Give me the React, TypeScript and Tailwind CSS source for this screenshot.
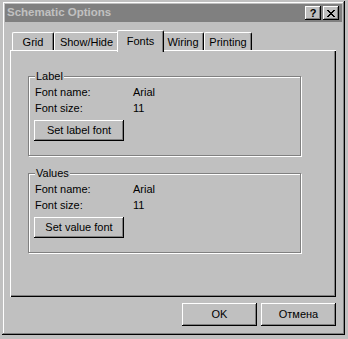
const raised =
  "shadow-[inset_-1px_-1px_#000,inset_1px_1px_#fff,inset_-2px_-2px_#808080]";

function Button({ label, className = "" }: { label: string; className?: string }) {
  return (
    <button
      className={`flex items-center justify-center bg-[#c0c0c0] text-[11px] text-black ${raised} ${className}`}
    >
      {label}
    </button>
  );
}

function Tab({ label, width, active }: { label: string; width: string; active?: boolean }) {
  if (active) {
    return (
      <div
        className={`relative z-10 -mx-[2px] -mb-[2px] flex h-[22px] items-start justify-center rounded-tl-[2px] rounded-tr-[2px] border-l border-t border-l-white border-t-white border-r border-r-black bg-[#c0c0c0] pt-[2px] text-[11px] shadow-[inset_-1px_0_#808080] ${width}`}
      >
        {label}
      </div>
    );
  }
  return (
    <div
      className={`flex h-[18px] items-center justify-center rounded-tl-[2px] rounded-tr-[2px] border-l border-t border-l-white border-t-white border-r border-r-black pt-px text-[11px] shadow-[inset_-1px_0_#808080] ${width}`}
    >
      {label}
    </div>
  );
}

function FontGroup({ title, button, className = "" }: { title: string; button: string; className?: string }) {
  return (
    <div
      className={`relative h-[80px] w-[273px] border border-[#808080] pl-[6px] pt-[7px] shadow-[1px_1px_0_#fff,inset_1px_1px_0_#fff] ${className}`}
    >
      <span className="absolute -top-[8px] left-[6px] bg-[#c0c0c0] px-px text-[11px] leading-[14px]">
        {title}
      </span>
      <div className="flex h-[16px] items-center text-[11px]">
        <span className="w-[98px]">Font name:</span>
        <span>Arial</span>
      </div>
      <div className="flex h-[16px] items-center text-[11px]">
        <span className="w-[98px]">Font size:</span>
        <span>11</span>
      </div>
      <Button label={button} className="-ml-px mt-[4px] h-[21px] w-[90px]" />
    </div>
  );
}

export default function App() {
  return (
    <div className="h-[339px] w-[348px] bg-[#c0c0c0] pl-[2px] pt-px font-['Liberation_Sans',Arial,sans-serif] text-black">
      <div
        className={`flex h-[334px] w-[343px] flex-col p-[3px] shadow-[inset_-1px_-1px_#000,inset_1px_1px_#c0c0c0,inset_-2px_-2px_#808080,inset_2px_2px_#fff]`}
      >
        <div className="flex h-[18px] items-center bg-[#808080] pl-[2px] pr-[3px]">
          <span className="text-[11.5px] font-bold text-[#c0c0c0]">Schematic Options</span>
          <div className="ml-auto flex gap-[2px]">
            <div className={`flex h-[14px] w-[16px] items-center justify-center bg-[#c0c0c0] text-[11px] font-bold leading-none ${raised}`}>
              ?
            </div>
            <div className={`flex h-[14px] w-[16px] items-center justify-center bg-[#c0c0c0] ${raised}`}>
              <svg width="8" height="7" viewBox="0 0 8 7" shapeRendering="crispEdges">
                <path d="M0 0h2v1H0zM6 0h2v1H6zM1 1h2v1H1zM5 1h2v1H5zM2 2h4v1H2zM3 3h2v1H3zM2 4h4v1H2zM1 5h2v1H1zM5 5h2v1H5zM0 6h2v1H0zM6 6h2v1H6z" fill="#000" />
              </svg>
            </div>
          </div>
        </div>

        <div className="ml-[5px] mt-[8px] flex h-[20px] items-end pl-[2px]">
          <Tab label="Grid" width="w-[42px]" />
          <Tab label="Show/Hide" width="w-[65px]" />
          <Tab label="Fonts" width="w-[47px]" active />
          <Tab label="Wiring" width="w-[42px]" />
          <Tab label="Printing" width="w-[48px]" />
        </div>

        <div className="ml-[5px] flex h-[247px] w-[326px] flex-col bg-[#c0c0c0] pl-[18px] pt-[26px] shadow-[inset_1px_1px_#fff,inset_-1px_-1px_#000,inset_-2px_-2px_#808080]">
          <FontGroup title="Label" button="Set label font" />
          <FontGroup title="Values" button="Set value font" className="mt-[17px]" />
        </div>

        <div className="ml-[5px] mt-[6px] flex w-[326px] justify-end gap-[4px]">
          <Button label="OK" className="h-[23px] w-[75px]" />
          <Button label="Отмена" className="h-[23px] w-[75px]" />
        </div>
      </div>
    </div>
  );
}
